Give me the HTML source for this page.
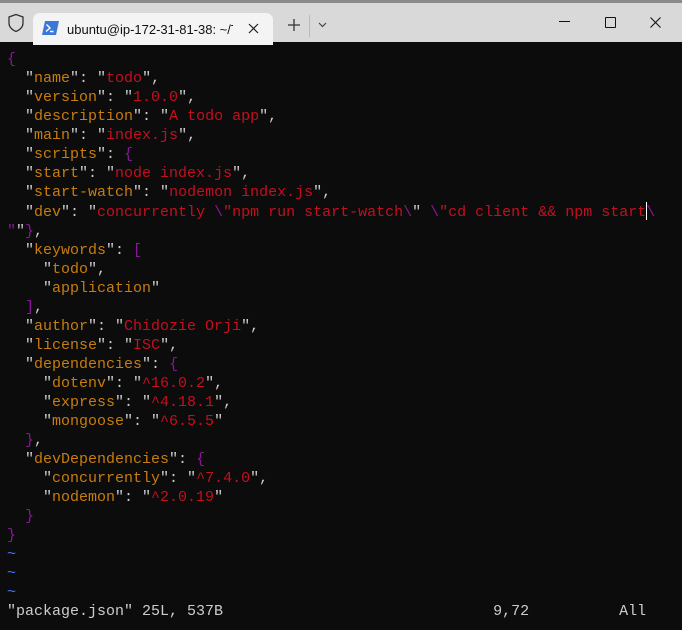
<!DOCTYPE html>
<html><head><meta charset="utf-8"><style>
body{margin:0;width:682px;height:630px;overflow:hidden;background:#0c0c0c;font-family:"Liberation Sans",sans-serif;position:relative}
.strip{position:absolute;left:0;top:0;width:682px;height:3px;background:#8a8a8a}
.title{position:absolute;left:0;top:3px;width:682px;height:39px;background:#d9d9d9}
.tab{position:absolute;left:33px;top:10px;width:240px;height:32px;background:#f4f4f4;border-radius:7px 7px 0 0}
.tab .t{position:absolute;left:34px;top:9px;font-size:13px;color:#111;white-space:nowrap;width:166px;overflow:hidden}
.term{position:absolute;left:7px;top:50px;font-family:"Liberation Mono",monospace;font-size:15px;line-height:19px;color:#cccccc;white-space:pre}
.k{color:#c87d0e}.s{color:#c50f1f}.p{color:#881798}.b{color:#3b78ff}
.cur{display:inline-block;width:1px;height:18px;background:#fff;vertical-align:-4px;margin-right:-1px}
</style></head><body>
<div class="strip"></div>
<div class="title">
<svg style="position:absolute;left:7px;top:10px" width="18" height="20" viewBox="0 0 18 20"><path d="M9 1.5 L16 4 V10 C16 14.5 12.5 17 9 18.5 C5.5 17 2 14.5 2 10 V4 Z" fill="none" stroke="#333" stroke-width="1.3"/></svg>
<div class="tab">
<svg style="position:absolute;left:9px;top:8px" width="17" height="14" viewBox="0 0 17 14"><path d="M3 0H17L14 14H0Z" fill="#3c78d8"/><path d="M4.5 3.5L8 7L4 10.5M8 10.5H11.5" stroke="#fff" stroke-width="1.4" fill="none"/></svg>
<div class="t">ubuntu@ip-172-31-81-38: ~/To</div>
<svg style="position:absolute;left:215px;top:10px" width="11" height="11"><path d="M1 1L10 10M10 1L1 10" stroke="#222" stroke-width="1.2"/></svg>
</div>
<svg style="position:absolute;left:288px;top:16px" width="12" height="12"><path d="M6 0V12M0 6H12" stroke="#333" stroke-width="1.3"/></svg>
<div style="position:absolute;left:309px;top:12px;width:1px;height:22px;background:#bbb"></div>
<svg style="position:absolute;left:318px;top:19px" width="9" height="6"><path d="M1 1L4.5 4.5L8 1" stroke="#444" stroke-width="1.2" fill="none"/></svg>
<div style="position:absolute;left:559px;top:18px;width:11px;height:1px;background:#111"></div>
<div style="position:absolute;left:605px;top:14px;width:9px;height:9px;border:1px solid #111;border-radius:1px"></div>
<svg style="position:absolute;left:650px;top:14px" width="11" height="11"><path d="M0.5 0.5L10.5 10.5M10.5 0.5L0.5 10.5" stroke="#111" stroke-width="1.1"/></svg>
</div>
<div class="term"><span class="p">{</span>
  "<span class="k">name</span>": "<span class="s">todo</span>",
  "<span class="k">version</span>": "<span class="s">1.0.0</span>",
  "<span class="k">description</span>": "<span class="s">A todo app</span>",
  "<span class="k">main</span>": "<span class="s">index.js</span>",
  "<span class="k">scripts</span>": <span class="p">{</span>
  "<span class="k">start</span>": "<span class="s">node index.js</span>",
  "<span class="k">start-watch</span>": "<span class="s">nodemon index.js</span>",
  "<span class="k">dev</span>": "<span class="s">concurrently </span><span class="p">\</span><span class="s">"npm run start-watch</span><span class="p">\</span>" <span class="p">\</span><span class="s">"cd client &amp;&amp; npm start</span><span class="cur"></span><span class="p">\</span>
<span class="p">"</span>"<span class="p">}</span>,
  "<span class="k">keywords</span>": <span class="p">[</span>
    "<span class="k">todo</span>",
    "<span class="k">application</span>"
  <span class="p">]</span>,
  "<span class="k">author</span>": "<span class="s">Chidozie Orji</span>",
  "<span class="k">license</span>": "<span class="s">ISC</span>",
  "<span class="k">dependencies</span>": <span class="p">{</span>
    "<span class="k">dotenv</span>": "<span class="s">^16.0.2</span>",
    "<span class="k">express</span>": "<span class="s">^4.18.1</span>",
    "<span class="k">mongoose</span>": "<span class="s">^6.5.5</span>"
  <span class="p">}</span>,
  "<span class="k">devDependencies</span>": <span class="p">{</span>
    "<span class="k">concurrently</span>": "<span class="s">^7.4.0</span>",
    "<span class="k">nodemon</span>": "<span class="s">^2.0.19</span>"
  <span class="p">}</span>
<span class="p">}</span>
<span class="b">~</span>
<span class="b">~</span>
<span class="b">~</span>
"package.json" 25L, 537B                              9,72          All</div>
</body></html>
